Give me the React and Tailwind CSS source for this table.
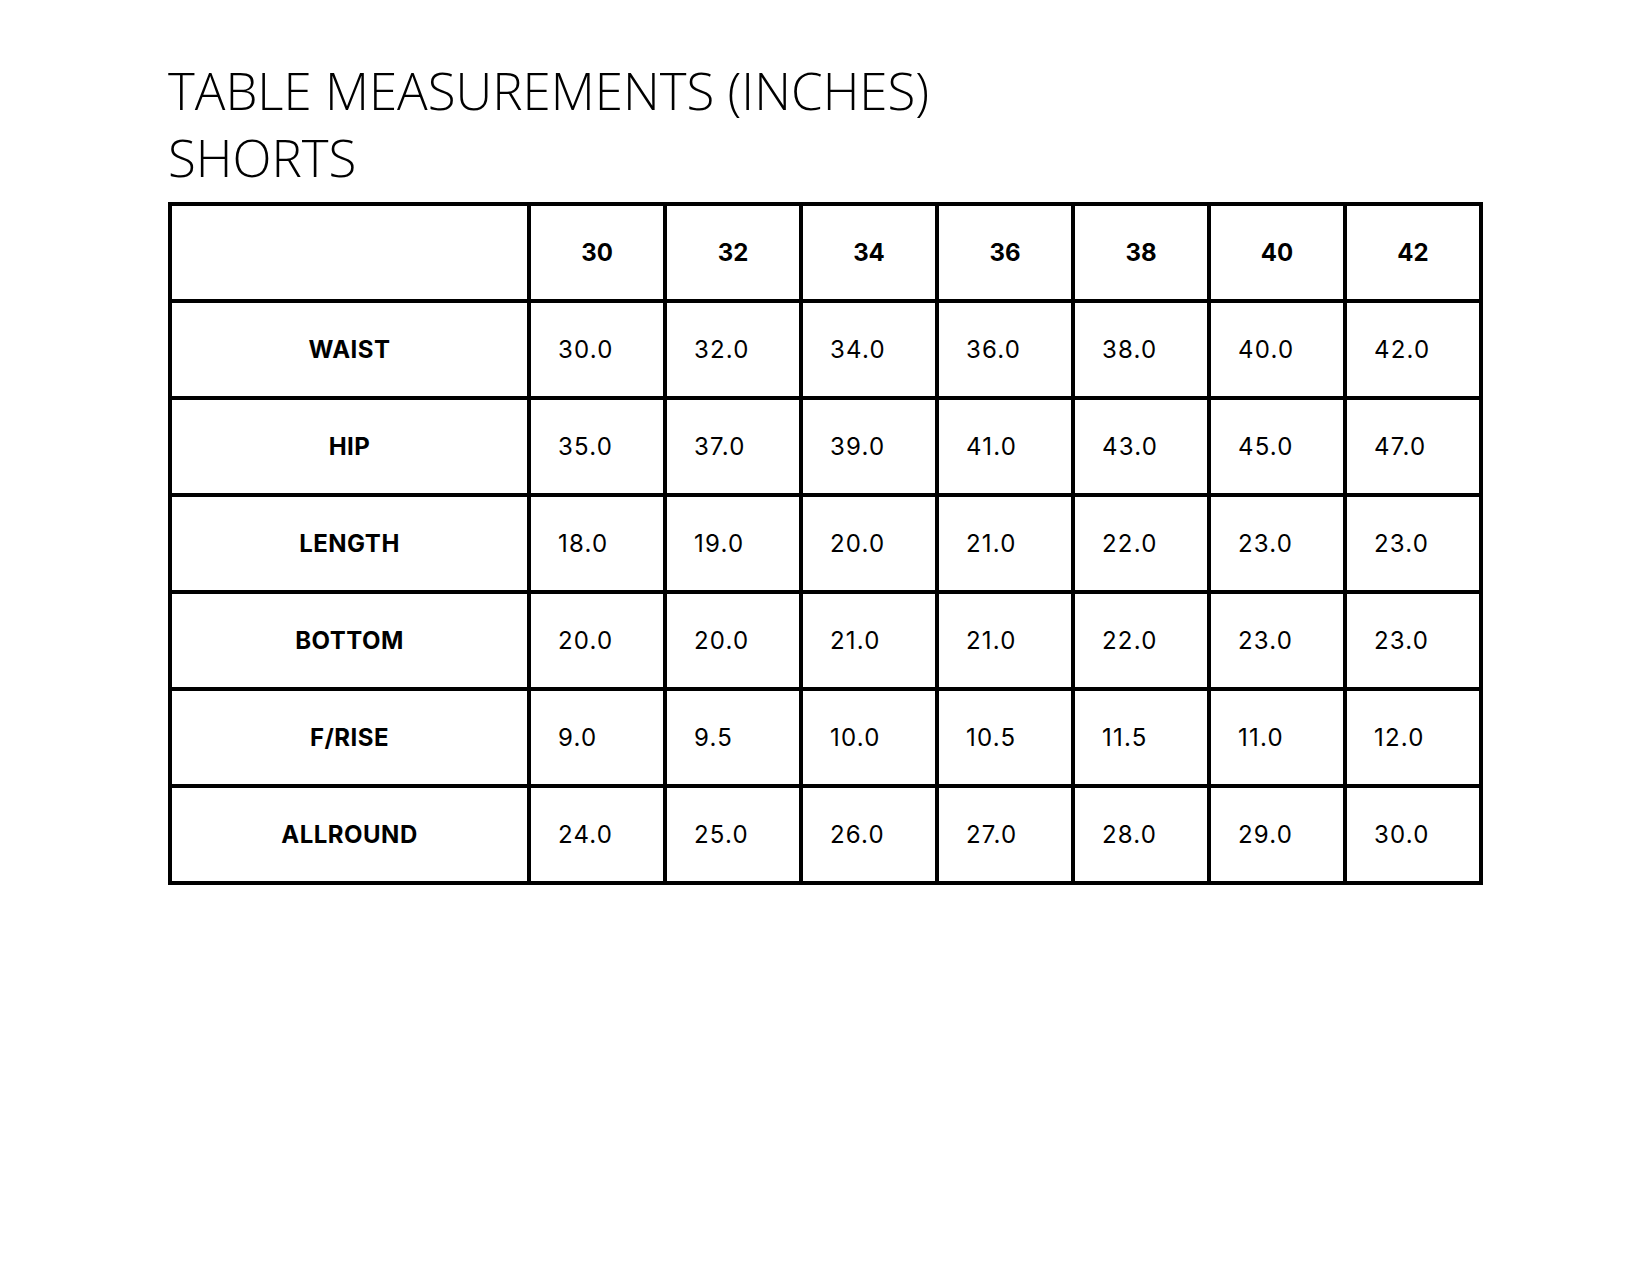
const SIZES = ["30", "32", "34", "36", "38", "40", "42"];

const ROWS = [
  ["WAIST", ["30.0", "32.0", "34.0", "36.0", "38.0", "40.0", "42.0"]],
  ["HIP", ["35.0", "37.0", "39.0", "41.0", "43.0", "45.0", "47.0"]],
  ["LENGTH", ["18.0", "19.0", "20.0", "21.0", "22.0", "23.0", "23.0"]],
  ["BOTTOM", ["20.0", "20.0", "21.0", "21.0", "22.0", "23.0", "23.0"]],
  ["F/RISE", ["9.0", "9.5", "10.0", "10.5", "11.5", "11.0", "12.0"]],
  ["ALLROUND", ["24.0", "25.0", "26.0", "27.0", "28.0", "29.0", "30.0"]],
];

export default function App() {
  return (
    <div className="min-h-[1275px] w-[1650px] bg-white pl-[168px] pt-[57px] text-black">
      <h1 className="font-['Open_Sans',sans-serif] text-[51px] font-[350] leading-[67px] [font-stretch:95%]">
        TABLE MEASUREMENTS (INCHES)
        <br />
        SHORTS
      </h1>

      <table className="mt-[11px] w-[1311px] table-fixed border-collapse border-4 border-black font-['Inter',sans-serif] text-[24px]">
        <colgroup>
          <col className="w-[359px]" />
          {SIZES.map((s) => (
            <col key={s} className="w-[136px]" />
          ))}
        </colgroup>
        <thead>
          <tr className="h-[97px]">
            <th className="border-4 border-black" />
            {SIZES.map((s) => (
              <th key={s} className="border-4 border-black text-center font-bold">
                {s}
              </th>
            ))}
          </tr>
        </thead>
        <tbody>
          {ROWS.map(([label, values]) => (
            <tr key={label} className="h-[97px]">
              <td className="border-4 border-black text-center font-bold tracking-[0.5px]">{label}</td>
              {values.map((v, i) => (
                <td key={i} className="border-4 border-black pl-[27px] text-left tracking-[1.2px]">
                  {v}
                </td>
              ))}
            </tr>
          ))}
        </tbody>
      </table>
    </div>
  );
}
